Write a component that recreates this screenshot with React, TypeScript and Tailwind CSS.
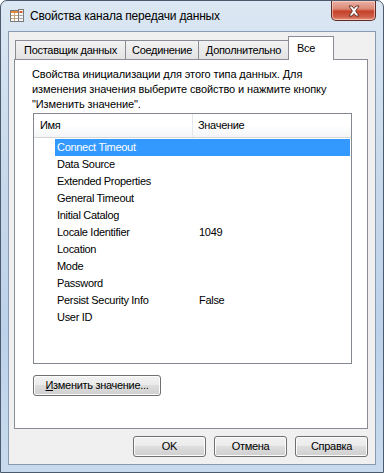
import React from 'react';

const rows: { name: string; value?: string }[] = [
  { name: 'Connect Timeout' },
  { name: 'Data Source' },
  { name: 'Extended Properties' },
  { name: 'General Timeout' },
  { name: 'Initial Catalog' },
  { name: 'Locale Identifier', value: '1049' },
  { name: 'Location' },
  { name: 'Mode' },
  { name: 'Password' },
  { name: 'Persist Security Info', value: 'False' },
  { name: 'User ID' },
];

const tabs = [
  { label: 'Поставщик данных', w: 'w-[111px]' },
  { label: 'Соединение', w: 'w-[74px]' },
  { label: 'Дополнительно', w: 'w-[91px]' },
];

const btn =
  'flex items-center justify-center rounded-[3px] border border-[#707070] bg-[linear-gradient(#f2f2f2_0%,#ebebeb_45%,#dddddd_50%,#cfcfcf_100%)] shadow-[inset_0_0_0_1px_#fcfcfc] text-black';

function TitleIcon() {
  return (
    <svg width="16" height="16" viewBox="0 0 16 16">
      <rect x="1.5" y="2.5" width="10" height="11" fill="#fff" stroke="#7a7a7a" />
      <rect x="2" y="3" width="9" height="2" fill="#e58a3a" />
      <line x1="2" y1="7.5" x2="11" y2="7.5" stroke="#c9a27a" />
      <line x1="2" y1="10.5" x2="11" y2="10.5" stroke="#c9a27a" />
      <line x1="5.5" y1="5" x2="5.5" y2="13" stroke="#c9a27a" />
      <rect x="9.5" y="1.5" width="5" height="12" fill="#f4f4f4" stroke="#7a7a7a" />
      <rect x="10.5" y="3" width="3" height="2" fill="#d25c2c" />
      <line x1="10.5" y1="7.5" x2="13.5" y2="7.5" stroke="#999" />
      <line x1="10.5" y1="10.5" x2="13.5" y2="10.5" stroke="#999" />
    </svg>
  );
}

function CloseButton() {
  return (
    <div className="w-[45px] h-[20px] rounded-b-[5px] border border-t-0 border-[#5c2b24] bg-[linear-gradient(#eab1a4_0%,#dc8a78_40%,#c7422a_55%,#d0614c_85%,#e79a84_100%)] shadow-[inset_0_0_0_1px_rgba(255,220,210,0.6)] flex items-center justify-center">
      <svg width="14" height="12" viewBox="0 0 14 12">
        <path
          d="M2 1 L5 1 L7 3.5 L9 1 L12 1 L8.6 6 L12 11 L9 11 L7 8.5 L5 11 L2 11 L5.4 6 Z"
          fill="#fff"
          stroke="#5a2a22"
          strokeWidth="0.9"
          strokeLinejoin="round"
        />
      </svg>
    </div>
  );
}

export default function App() {
  return (
    <div
      className="w-[384px] h-[473px] rounded-t-[7px] border border-[#4b5a6c] bg-[linear-gradient(180deg,#dbe7f3_0%,#c6d8eb_40%,#bcd2ea_70%,#c8dbee_100%)] flex flex-col text-[11px] tracking-[-0.3px] text-black overflow-hidden"
      style={{ fontFamily: '"Segoe UI", "Liberation Sans", Arial, sans-serif' }}
    >
      {/* title bar */}
      <div className="h-[30px] flex items-start">
        <div className="flex items-center gap-[5px] pl-[8px] pt-[7px]">
          <TitleIcon />
          <span className="text-[12px] tracking-[-0.2px] text-black leading-none">Свойства канала передачи данных</span>
        </div>
        <div className="ml-auto mr-[7px]">
          <CloseButton />
        </div>
      </div>

      {/* client */}
      <div className="mx-[7px] mb-[7px] flex-1 border border-[#8a9bb1] bg-[#f0f0f0] flex flex-col">
        <div className="pl-[5px] pr-[7px] pt-[4px] flex flex-col flex-1">
          {/* tabs */}
          <div className="flex items-end h-[23px] pl-[1px]">
            {tabs.map((t) => (
              <div
                key={t.label}
                className={
                  t.w +
                  ' h-[19px] -mr-[1px] border border-b-0 border-[#898c95] bg-[linear-gradient(#f2f2f2,#e3e3e3)] flex items-center justify-center'
                }
              >
                {t.label}
              </div>
            ))}
            <div className="h-[24px] -mb-[1px] relative z-10 w-[46px] pl-[8px] border border-b-0 border-[#898c95] bg-white flex items-start pt-[3px]">
              Все
            </div>
          </div>

          {/* panel */}
          <div className="h-[370px] border border-[#898c95] bg-white flex flex-col pl-[17px] pr-[15px]">
            <p className="mt-[7px] leading-[15px] tracking-[-0.1px]">
              Свойства инициализации для этого типа данных. Для
              <br />
              изменения значения выберите свойство и нажмите кнопку
              <br />
              "Изменить значение".
            </p>

            <div className="mt-[1px] ml-[1px] h-[251px] border border-[#828790] bg-white flex flex-col">
              <div className="h-[24px] flex border-b border-[#d5d5d5] bg-[linear-gradient(#ffffff_0%,#ffffff_50%,#f4f5f7_100%)]">
                <div className="w-[159px] pl-[6px] flex items-center border-r border-[#e3e6ea]">Имя</div>
                <div className="pl-[5px] flex items-center">Значение</div>
              </div>
              <div className="flex flex-col pt-[1px]">
                {rows.map((r, i) => (
                  <div key={r.name} className="h-[17px] flex items-center">
                    <div className="w-[21px]" />
                    <div
                      className={
                        'flex-1 flex items-center h-[17px] mr-[1px] ' +
                        (i === 0 ? 'bg-[#3399ff] text-white' : '')
                      }
                    >
                      <span className="w-[144px] pl-[2px]">{r.name}</span>
                      <span>{r.value}</span>
                    </div>
                  </div>
                ))}
              </div>
            </div>

            <div className="mt-[11px] ml-[1px]">
              <div className={btn + ' w-[128px] h-[21px]'}>
                <span>
                  <span className="underline">И</span>зменить значение...
                </span>
              </div>
            </div>
          </div>

          {/* bottom buttons */}
          <div className="mt-auto mb-[7px] flex justify-end gap-[8px]">
            <div className={btn + ' w-[73px] h-[21px]'}>OK</div>
            <div className={btn + ' w-[73px] h-[21px]'}>Отмена</div>
            <div className={btn + ' w-[73px] h-[21px]'}>Справка</div>
          </div>
        </div>
      </div>
    </div>
  );
}
